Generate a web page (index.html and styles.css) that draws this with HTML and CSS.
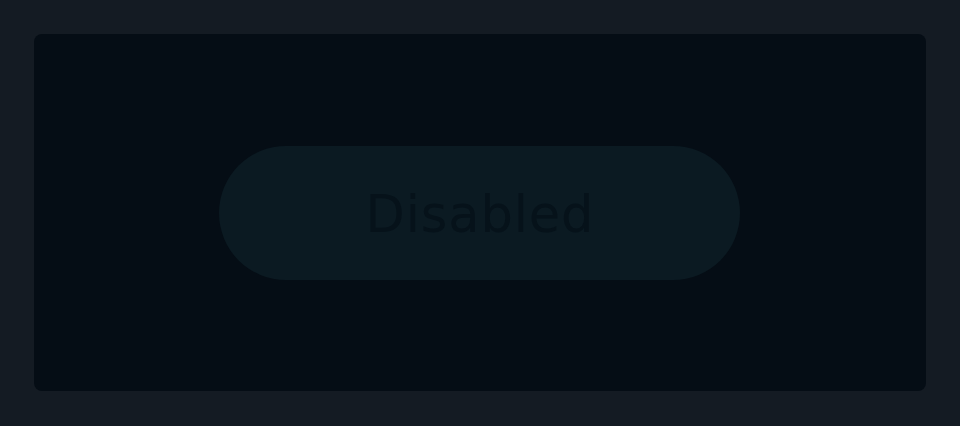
FILE: index.html
```html
<!DOCTYPE html>
<html>
<head>
<meta charset="utf-8">
<link rel="stylesheet" href="styles.css">
</head>
<body>
<div class="frame">
  <div class="panel">
    <button class="btn" disabled>Disabled</button>
  </div>
</div>
</body>
</html>
```
FILE: styles.css
```css
html, body {
  margin: 0;
  padding: 0;
  background: #141b23;
}
.frame {
  width: 960px;
  height: 426px;
  box-sizing: border-box;
  padding: 34px 34px 35px 34px;
}
.panel {
  width: 100%;
  height: 100%;
  background: #050d15;
  border-radius: 8px;
  display: flex;
  justify-content: center;
  padding-top: 112px;
  box-sizing: border-box;
}
.btn {
  width: 521px;
  height: 134px;
  border: none;
  border-radius: 67px;
  background: #0b1a22;
  color: #06121a;
  font-family: "DejaVu Sans", Lato, sans-serif;
  font-size: 51px;
  font-weight: 400;
  letter-spacing: 0.9px;
  padding: 2px 0 0 0.9px;
  display: flex;
  align-items: center;
  justify-content: center;
  margin-left: -1px;
}
```
